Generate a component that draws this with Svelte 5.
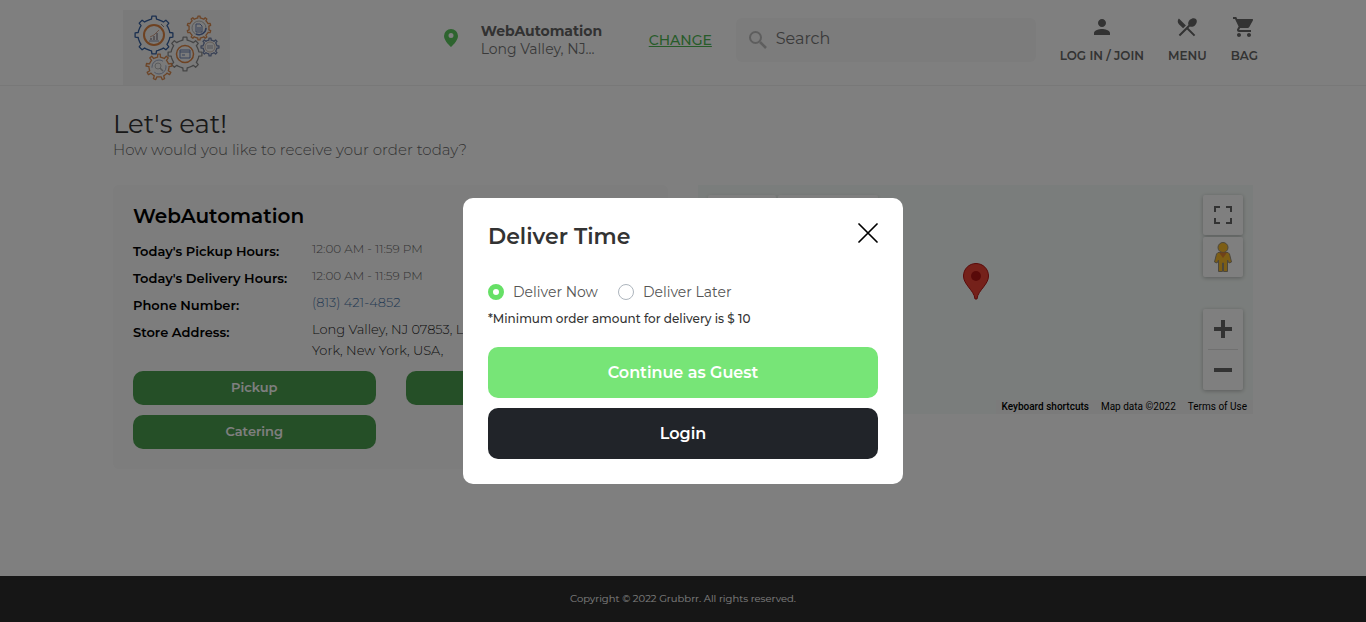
<script>
  let deliver = $state('now');

  const hours = '12:00 AM - 11:59 PM';

  // Closed outline of a cog: each tooth is a raised flat step on the rim.
  function gear(cx, cy, outer, inner, teeth) {
    const step = (Math.PI * 2) / teeth;
    const points = [];
    for (let i = 0; i < teeth; i++) {
      const a = i * step - Math.PI / 2;
      const spots = [[-0.34, inner], [-0.2, inner], [-0.14, outer], [0.14, outer], [0.2, inner], [0.34, inner]];
      for (const [f, r] of spots) {
        points.push(`${(cx + r * Math.cos(a + f * step)).toFixed(2)} ${(cy + r * Math.sin(a + f * step)).toFixed(2)}`);
      }
    }
    return `M${points.join('L')}Z`;
  }

  const gears = [
    { x: 31, y: 25, outer: 19, inner: 16, teeth: 8, color: '#355f9f' },
    { x: 76, y: 18, outer: 12, inner: 10, teeth: 10, color: '#d98a50' },
    { x: 62, y: 44, outer: 17, inner: 14, teeth: 8, color: '#8b8b8b' },
    { x: 87, y: 37, outer: 9, inner: 7, teeth: 8, color: '#7484ac' },
    { x: 36, y: 57, outer: 13, inner: 10, teeth: 9, color: '#d98a50' }
  ];
</script>

<div class="page">
  <header>
    <div class="bar">
      <svg class="logo" viewBox="0 0 107 75" role="img" aria-label="WebAutomation">
        <rect width="107" height="75" fill="#f4f4f4" />
        {#each gears as g}
          <path d={gear(g.x, g.y, g.outer, g.inner, g.teeth)} fill="none" stroke={g.color} stroke-width="1.3" stroke-linejoin="round" />
        {/each}
        <g fill="none">
          <circle cx="31" cy="25" r="10" stroke="#dd8544" stroke-width="2" />
          <circle cx="62" cy="44" r="8.500" stroke="#dd8544" stroke-width="1.500" />
          <circle cx="76" cy="18" r="7" stroke="#b5b5b5" />
          <path d="M83 18a7 7 0 0 1-10 6" stroke="#5a74ae" stroke-width="1.500" />
          <circle cx="87" cy="37" r="5" stroke="#c9b9b0" />
          <circle cx="36" cy="57" r="7" stroke="#9fabc6" stroke-dasharray="16 5" />
          <circle cx="35" cy="56" r="3" stroke="#b8b8b8" />
          <path d="M37 58l3 3" stroke="#adadad" stroke-width="1.500" />
          <path d="M27 27l4-2 5-5" stroke="#d0a088" />
          <path d="M38 14l3 3" stroke="#8a8a8a" />
          <path d="M26 31h10" stroke="#8e96ad" />
          <path d="M28 30v-2M31 30v-4M34 30v-7" stroke="#b0a8ae" stroke-width="2" />
          <path d="M73 14h4l2 2v6h-6zM74 18h4M74 20h4" stroke="#6d83b4" />
          <path d="M57 40h10v8H57zM57 42h10M59 45h3" stroke="#6d83b4" />
          <path d="M84 36h6M84 38h6" stroke="#a7a7b0" />
        </g>
      </svg>

      <div class="store">
        <svg class="place" viewBox="0 0 14 18" aria-hidden="true">
          <path fill="#5cc85f" fill-rule="evenodd" d="M7 0a7 7 0 0 0-7 7c0 5 7 11 7 11s7-6 7-11a7 7 0 0 0-7-7zm0 4a2.500 2.500 0 1 1 0 5 2.500 2.500 0 0 1 0-5z" />
        </svg>
        <div class="where">
          <strong>WebAutomation</strong>
          <span>Long Valley, NJ...</span>
        </div>
        <a class="change" href="#change">CHANGE</a>
      </div>

      <label class="search">
        <svg viewBox="0 0 18 18" aria-hidden="true">
          <circle cx="6.500" cy="6.500" r="5.500" fill="none" stroke="#bcbcbc" stroke-width="2" />
          <path d="M11 11l6 6" stroke="#bcbcbc" stroke-width="2.500" />
        </svg>
        <input type="search" placeholder="Search" aria-label="Search" />
      </label>

      <nav>
        <a href="#login">
          <svg viewBox="0 0 24 24" aria-hidden="true"><path fill="currentColor" d="M12 12c2.210 0 4-1.790 4-4s-1.790-4-4-4-4 1.790-4 4 1.790 4 4 4zm0 2c-2.670 0-8 1.340-8 4v2h16v-2c0-2.660-5.330-4-8-4z" /></svg>
          <span>LOG IN / JOIN</span>
        </a>
        <a href="#menu">
          <svg viewBox="0 0 24 24" aria-hidden="true"><path fill="currentColor" d="M8.100 13.340l2.830-2.830L3.910 3.500c-1.560 1.560-1.560 4.090 0 5.660l4.190 4.180zm6.780-1.810c1.530.71 3.680.21 5.270-1.380 1.910-1.910 2.280-4.650.81-6.120-1.460-1.460-4.200-1.100-6.120.81-1.590 1.590-2.090 3.740-1.380 5.270L3.700 19.870l1.410 1.410L12 14.410l6.880 6.880 1.410-1.410L13.410 13l1.470-1.470z" /></svg>
          <span>MENU</span>
        </a>
        <a href="#bag">
          <svg viewBox="0 0 24 24" aria-hidden="true"><path fill="currentColor" d="M7 18c-1.100 0-1.990.9-1.990 2S5.900 22 7 22s2-.9 2-2-.9-2-2-2zM1 2v2h2l3.600 7.590-1.350 2.450c-.16.28-.25.61-.25.96 0 1.100.9 2 2 2h12v-2H7.420c-.14 0-.25-.11-.25-.25l.03-.12.900-1.630h7.450c.75 0 1.410-.41 1.750-1.030l3.580-6.490A1 1 0 0 0 20 4H5.210l-.94-2H1zm16 16c-1.100 0-1.990.9-1.990 2s.89 2 1.990 2 2-.9 2-2-.9-2-2-2z" /></svg>
          <span>BAG</span>
        </a>
      </nav>
    </div>
  </header>

  <main>
    <h1>Let's eat!</h1>
    <p class="lead">How would you like to receive your order today?</p>

    <div class="columns">
      <section class="card">
        <h2>WebAutomation</h2>
        <dl>
          <dt>Today's Pickup Hours:</dt>
          <dd class="muted">{hours}</dd>
          <dt>Today's Delivery Hours:</dt>
          <dd class="muted">{hours}</dd>
          <dt>Phone Number:</dt>
          <dd><a href="tel:8134214852">(813) 421-4852</a></dd>
          <dt>Store Address:</dt>
          <dd>Long Valley, NJ 07853, L<br />York, New York, USA,</dd>
        </dl>
        <div class="ways">
          <button type="button">Pickup</button>
          <button type="button"></button>
          <button type="button">Catering</button>
        </div>
      </section>

      <section class="map">
        <div class="types"><i></i><i></i></div>
        <svg class="marker" viewBox="0 0 26 37" aria-hidden="true">
          <path d="M13 .5C6 .5 .5 6 .5 13c0 4 2 7 5 11 3 4 6 7 6.500 12h2c.5-5 3.500-8 6.500-12 3-4 5-7 5-11C25.500 6 20 .5 13 .5z" fill="#ea4335" stroke="#b31412" />
          <circle cx="13" cy="13" r="5" fill="#b31412" />
        </svg>
        <div class="tools">
          <button type="button" class="tool" aria-label="Full screen">
            <svg viewBox="0 0 18 18" width="18" height="18" fill="none" stroke="#666" stroke-width="2"><path d="M1 6V1h5M12 1h5v5M17 12v5h-5M6 17H1v-5" /></svg>
          </button>
          <button type="button" class="tool" aria-label="Street view">
            <svg viewBox="0 0 18 30" width="18" height="30" fill="#fbbc2b" stroke="#988e78">
              <path d="M4 10.500h10l1.500 1.500 2 8-2.500 1-1.500-3v11.500H9.500V21h-1v8.500h-4V18L3 21l-2.500-1 2-8z" />
              <circle cx="9" cy="5.500" r="5" />
              <path d="M5 10.500h8L9 16z" fill="#e28434" stroke="none" />
            </svg>
          </button>
          <div class="zoom">
            <button type="button" aria-label="Zoom in"><svg viewBox="0 0 18 18" width="18" height="18"><path d="M9 0v18M0 9h18" stroke="#666" stroke-width="4" /></svg></button>
            <hr />
            <button type="button" aria-label="Zoom out"><svg viewBox="0 0 18 18" width="18" height="18"><path d="M0 9h18" stroke="#666" stroke-width="4" /></svg></button>
          </div>
        </div>
        <div class="credits">
          <button type="button">Keyboard shortcuts</button>
          <span>Map data ©2022</span>
          <a href="#terms">Terms of Use</a>
        </div>
      </section>
    </div>
  </main>

  <footer>Copyright © 2022 Grubbrr. All rights reserved.</footer>
</div>

<div class="backdrop">
  <div class="modal" role="dialog" aria-modal="true" aria-labelledby="deliver-title">
    <div class="top">
      <h2 id="deliver-title">Deliver Time</h2>
      <button type="button" class="close" aria-label="Close">
        <svg viewBox="0 0 20 20" width="20" height="20"><path d="M1 1l18 18M19 1L1 19" stroke="#000" stroke-width="1.700" stroke-linecap="round" /></svg>
      </button>
    </div>
    <div class="choices">
      <label><input type="radio" name="deliver" value="now" bind:group={deliver} />Deliver Now</label>
      <label><input type="radio" name="deliver" value="later" bind:group={deliver} />Deliver Later</label>
    </div>
    <p>*Minimum order amount for delivery is $ 10</p>
    <button type="button" class="wide guest">Continue as Guest</button>
    <button type="button" class="wide">Login</button>
  </div>
</div>

<style>
  :global(body) {
    margin: 0;
    background: #fff;
    font-family: Montserrat, Inter, sans-serif;
    color: #222;
  }
  * { box-sizing: border-box; }
  svg { display: block; flex: none; }
  button, input { font: inherit; }
  button { border: 0; cursor: pointer; padding: 0; }
  h1, h2, p, dl, dd { margin: 0; }

  .page {
    min-height: 100vh;
    display: flex;
    flex-direction: column;
  }
  header { border-bottom: 1px solid #f0f0f0; }
  .bar {
    max-width: 1150px;
    min-height: 85px;
    margin: 0 auto;
    padding: 10px 0 0 15px;
    display: flex;
    align-items: flex-start;
    gap: 24px;
  }
  .logo { width: 107px; height: 75px; }
  .store {
    margin-left: auto;
    display: flex;
    align-items: center;
    height: 60px;
  }
  .place { width: 14px; height: 18px; margin: 0 23px 4px 0; }
  .where {
    width: 168px;
    display: flex;
    flex-direction: column;
    font-size: 14px;
    line-height: 18px;
    color: #757575;
  }
  .where strong { font-weight: 700; color: #646464; }
  .change { width: 63px; font-size: 14px; font-weight: 500; color: #4fb853; white-space: nowrap; }
  .search {
    flex: 0 1 300px;
    height: 44px;
    margin-top: 8px;
    padding: 0 21px 0 13px;
    display: flex;
    align-items: center;
    gap: 9px;
    border-radius: 6px;
    background: #f8f8f8;
  }
  .search svg { width: 18px; height: 18px; }
  .search input {
    width: 100%;
    min-width: 0;
    border: 0;
    padding: 0 0 4px;
    outline: 0;
    background: none;
    font-size: 16px;
  }
  .search input::placeholder { color: #757575; opacity: 1; }
  nav { display: flex; gap: 24px; padding-top: 5px; }
  nav a {
    display: flex;
    flex-direction: column;
    align-items: center;
    gap: 9px;
    font-size: 12px;
    line-height: 16px;
    font-weight: 600;
    color: #666;
    text-decoration: none;
    white-space: nowrap;
  }
  nav svg { width: 24px; height: 24px; }

  main {
    flex: 1;
    width: 100%;
    max-width: 1140px;
    margin: 0 auto;
    padding: 22px 0;
  }
  h1 { font-size: 26px; line-height: 32px; font-weight: 400; color: #333; }
  .lead { font-size: 15px; line-height: 20px; font-weight: 300; color: #666; }
  .columns {
    margin-top: 25px;
    display: grid;
    grid-template-columns: 1fr 1fr;
    align-items: start;
    gap: 30px;
  }
  .card { padding: 20px; border-radius: 6px; background: #fafafa; }
  .card h2 { font-size: 20px; line-height: 22px; font-weight: 600; color: #000; }
  dl {
    margin: 11px 0 10px;
    display: grid;
    grid-template-columns: 179px 1fr;
    row-gap: 6px;
    font-size: 13px;
    line-height: 21px;
  }
  dt { padding-top: 3px; line-height: 20px; font-weight: 600; color: #000; white-space: nowrap; }
  dd { font-weight: 300; white-space: nowrap; }
  dt, dd { max-height: 42px; }
  dd.muted { font-size: 12px; color: #666; }
  dd a { color: #4a76a8; text-decoration: none; }
  dt { margin-bottom: -2px; }
  .ways { display: grid; grid-template-columns: 1fr 1fr; gap: 10px 30px; }
  .ways button {
    height: 34px;
    padding-bottom: 2px;
    border-radius: 10px;
    background: #4a9e4e;
    color: #fff;
    font-size: 13px;
    font-weight: 600;
  }

  .map { position: relative; height: 229px; background: #f5fbf8; }
  .types { position: absolute; top: 10px; left: 10px; display: flex; gap: 2px; }
  .types i { width: 68px; height: 40px; background: #fff; border-radius: 2px; box-shadow: 0 1px 4px #0002; }
  .types i:last-child { width: 100px; }
  .marker { position: absolute; left: 50%; bottom: 50%; width: 26px; height: 37px; transform: translateX(-50%); }
  .tools { position: absolute; top: 10px; right: 10px; display: grid; gap: 2px; }
  .tool, .zoom { width: 40px; background: #fff; border-radius: 2px; box-shadow: 0 1px 4px #0004; }
  .tool { height: 40px; display: grid; place-items: center; }
  .zoom { margin-top: 30px; }
  .zoom button { width: 40px; height: 40px; display: grid; place-items: center; background: none; }
  .zoom hr { width: 30px; height: 1px; margin: 0 auto; border: 0; background: #e0e0e0; }
  .credits {
    position: absolute;
    right: 0;
    bottom: 0;
    padding: 0 6px;
    display: flex;
    gap: 12px;
    background: #f7f7f7;
    font: 10px/14px Roboto, sans-serif;
    color: #000;
  }
  .credits button { background: none; font-weight: 500; color: #000; }
  .credits a { color: inherit; text-decoration: none; }

  footer {
    padding: 14px;
    background: #2d2d2d;
    color: #fff;
    font-size: 10px;
    line-height: 18px;
    text-align: center;
  }

  .backdrop {
    position: fixed;
    inset: 0;
    padding-top: 60px;
    display: grid;
    place-items: center;
    background: rgba(0, 0, 0, 0.5);
  }
  .modal { width: 440px; max-width: 100%; padding: 25px; border-radius: 10px; background: #fff; }
  .top { display: flex; justify-content: space-between; align-items: flex-start; }
  .top h2 { font-size: 22px; line-height: 28px; font-weight: 600; color: #333; }
  .close { background: none; }
  .choices {
    margin-top: 30px;
    display: flex;
    gap: 20px;
    font-size: 14px;
    line-height: 22px;
    color: #555;
  }
  .choices label { display: flex; align-items: center; gap: 9px; }
  .choices input {
    appearance: none;
    width: 16px;
    height: 16px;
    margin: 0;
    border: 1px solid #adb5bd;
    border-radius: 50%;
    background: #fff;
  }
  .choices input:checked { border: 5px solid #66e066; }
  .modal p { margin: 7px 0 19px; font-size: 12px; line-height: 18px; font-weight: 500; color: #333; }
  .wide {
    display: block;
    width: 100%;
    height: 51px;
    border-radius: 10px;
    background: #212429;
    color: #fff;
    font-size: 16px;
    font-weight: 600;
  }
  .guest { margin-bottom: 10px; background: #77e577; }
</style>
